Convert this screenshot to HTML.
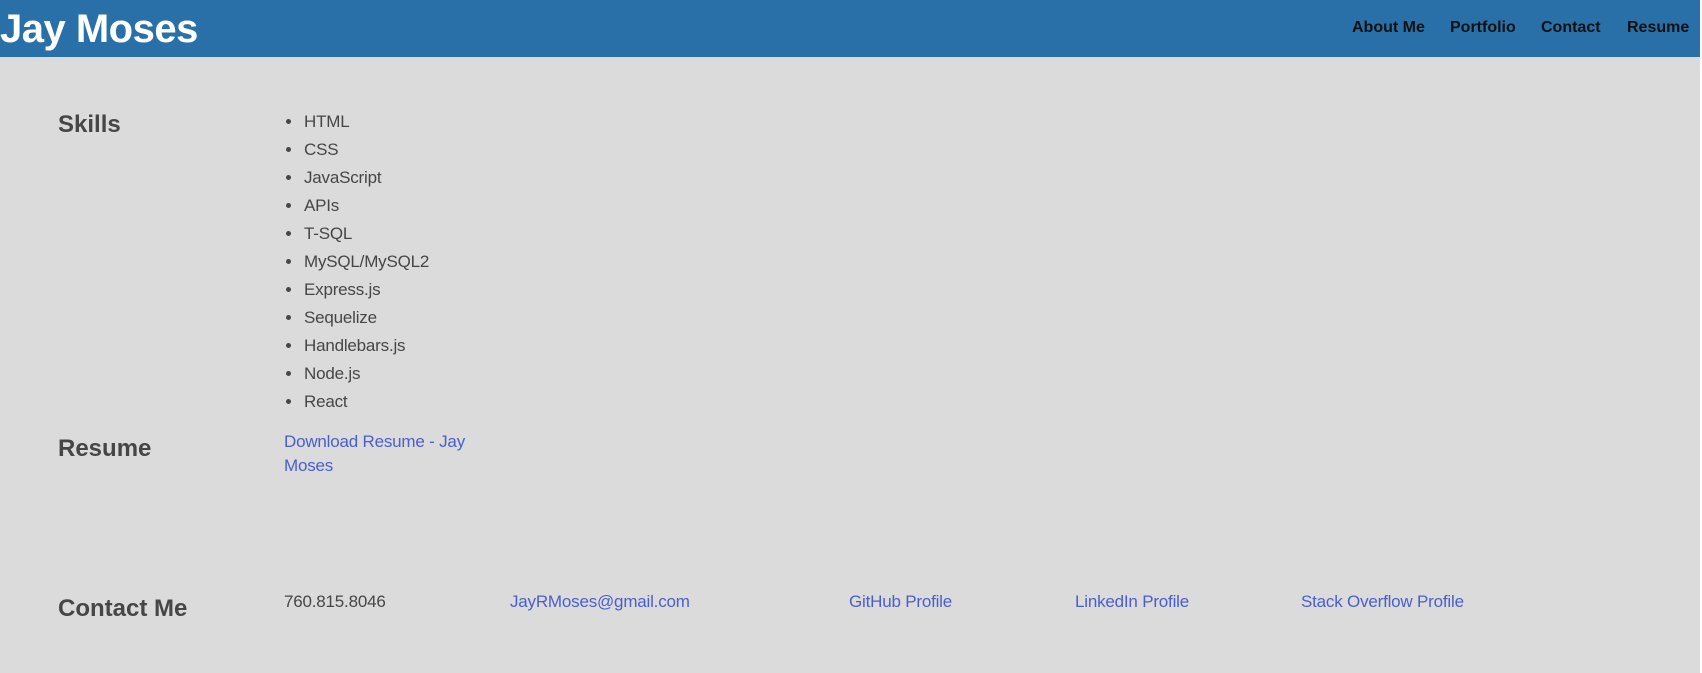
<!DOCTYPE html>
<html><head><style>
*{margin:0;padding:0;box-sizing:border-box}
body{width:1702px;height:673px;background:#dbdbdb;font-family:"Liberation Sans",Arial,sans-serif;position:relative;overflow:hidden}
.hdr{position:absolute;left:0;top:0;width:1700px;height:57px;background:#2970a8}
.edge{position:absolute;left:1700px;top:0;width:2px;height:673px;background:#fff}
.t{position:absolute;white-space:nowrap;line-height:1}
.title{left:0;top:9px;font-size:40px;font-weight:bold;color:#fff;letter-spacing:-0.5px}
.nav{top:20px;font-size:16px;font-weight:bold;color:#111}
.h{left:58px;font-size:24px;font-weight:bold;color:#464646}
.li{left:304px;font-size:17px;color:#464646;letter-spacing:-0.2px}
.dot{position:absolute;left:286px;width:5px;height:5px;border-radius:50%;background:#464646}
.a{font-size:17px;color:#4a5fcb;letter-spacing:-0.2px}
</style></head><body>
<div class="hdr"></div><div class="edge"></div>
<div class="t title">Jay Moses</div>
<div class="t nav" style="left:1352px">About Me</div>
<div class="t nav" style="left:1450px">Portfolio</div>
<div class="t nav" style="left:1541px">Contact</div>
<div class="t nav" style="left:1627px">Resume</div>

<div class="t h" style="top:113px">Skills</div>
<div class="t li" style="top:113px">HTML</div><div class="dot" style="top:119px"></div>
<div class="t li" style="top:141px">CSS</div><div class="dot" style="top:147px"></div>
<div class="t li" style="top:169px">JavaScript</div><div class="dot" style="top:175px"></div>
<div class="t li" style="top:197px">APIs</div><div class="dot" style="top:203px"></div>
<div class="t li" style="top:225px">T-SQL</div><div class="dot" style="top:231px"></div>
<div class="t li" style="top:253px">MySQL/MySQL2</div><div class="dot" style="top:259px"></div>
<div class="t li" style="top:281px">Express.js</div><div class="dot" style="top:287px"></div>
<div class="t li" style="top:309px">Sequelize</div><div class="dot" style="top:315px"></div>
<div class="t li" style="top:337px">Handlebars.js</div><div class="dot" style="top:343px"></div>
<div class="t li" style="top:365px">Node.js</div><div class="dot" style="top:371px"></div>
<div class="t li" style="top:393px">React</div><div class="dot" style="top:399px"></div>

<div class="t h" style="top:437px">Resume</div>
<div class="t a" style="left:284px;top:433px">Download Resume - Jay</div>
<div class="t a" style="left:284px;top:457px">Moses</div>

<div class="t h" style="top:597px">Contact Me</div>
<div class="t" style="left:284px;top:593px;font-size:17px;color:#464646;letter-spacing:-0.2px">760.815.8046</div>
<div class="t a" style="left:510px;top:593px">JayRMoses@gmail.com</div>
<div class="t a" style="left:849px;top:593px">GitHub Profile</div>
<div class="t a" style="left:1075px;top:593px">LinkedIn Profile</div>
<div class="t a" style="left:1301px;top:593px">Stack Overflow Profile</div>
</body></html>
